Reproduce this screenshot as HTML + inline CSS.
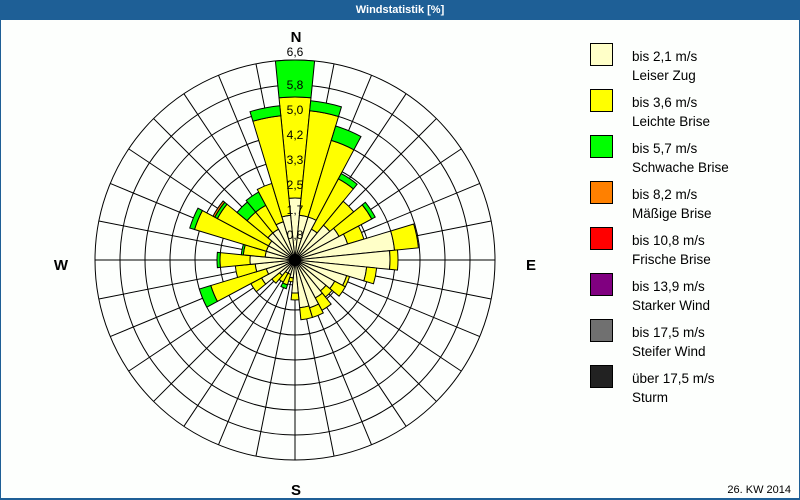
<!DOCTYPE html>
<html><head><meta charset="utf-8"><style>
html,body{margin:0;padding:0;background:#fff}
#w{position:relative;width:800px;height:500px;overflow:hidden;background:#fdfffd;font-family:"Liberation Sans",sans-serif}
#hd{position:absolute;left:0;top:0;width:800px;height:20px;background:#1e5f96;color:#fff;font-weight:bold;font-size:11px;text-align:center;line-height:20px}
#fr{position:absolute;left:0;top:20px;width:798px;height:478px;border-left:1px solid #1e5f96;border-right:1px solid #1e5f96;border-bottom:2px solid #1e5f96}
svg{position:absolute;left:0;top:0}
</style></head><body><div id="w">
<div id="fr"></div>
<div id="hd">Windstatistik [%]</div>
<svg id="s" width="800" height="500" xmlns="http://www.w3.org/2000/svg">
<g id="grid" fill="none" stroke="#000" stroke-width="1"></g>
<g id="bars" stroke="#000" stroke-width="1"></g>
<circle cx="295" cy="260" r="6" fill="#000"/>
<g font-size="12" fill="#000" text-anchor="middle" font-family="Liberation Sans, sans-serif">
<text x="295" y="239">0,8</text><text x="295" y="214">1,7</text><text x="295" y="189">2,5</text><text x="295" y="164">3,3</text><text x="295" y="139">4,2</text><text x="295" y="114">5,0</text><text x="295" y="89">5,8</text><text x="295" y="56">6,6</text>
</g>
<g font-size="15" font-weight="bold" fill="#000" text-anchor="middle" font-family="Liberation Sans, sans-serif">
<text x="296" y="42">N</text><text x="61" y="270">W</text><text x="531" y="270">E</text><text x="296" y="495">S</text>
</g>
<g stroke="#000" stroke-width="1">
<rect x="590.5" y="43.5" width="22" height="22" fill="#ffffc8"/>
<rect x="590.5" y="89.5" width="22" height="22" fill="#ffff00"/>
<rect x="590.5" y="135.5" width="22" height="22" fill="#00ff00"/>
<rect x="590.5" y="181.5" width="22" height="22" fill="#ff8000"/>
<rect x="590.5" y="227.5" width="22" height="22" fill="#ff0000"/>
<rect x="590.5" y="273.5" width="22" height="22" fill="#800080"/>
<rect x="590.5" y="319.5" width="22" height="22" fill="#707070"/>
<rect x="590.5" y="365.5" width="22" height="22" fill="#222"/>
</g>
<g font-size="13.5" fill="#000" font-family="Liberation Sans, sans-serif">
<text x="632" y="61">bis 2,1 m/s</text><text x="632" y="80">Leiser Zug</text>
<text x="632" y="107">bis 3,6 m/s</text><text x="632" y="126">Leichte Brise</text>
<text x="632" y="153">bis 5,7 m/s</text><text x="632" y="172">Schwache Brise</text>
<text x="632" y="199">bis 8,2 m/s</text><text x="632" y="218">Mäßige Brise</text>
<text x="632" y="245">bis 10,8 m/s</text><text x="632" y="264">Frische Brise</text>
<text x="632" y="291">bis 13,9 m/s</text><text x="632" y="310">Starker Wind</text>
<text x="632" y="337">bis 17,5 m/s</text><text x="632" y="356">Steifer Wind</text>
<text x="632" y="383">über 17,5 m/s</text><text x="632" y="402">Sturm</text>
</g>
<text x="791" y="493" font-size="11" text-anchor="end" fill="#000" font-family="Liberation Sans, sans-serif">26. KW 2014</text>
</svg>
<script>
(function(){
var cx=295,cy=260,ns="http://www.w3.org/2000/svg";
var g=document.getElementById('grid');
for(var r=25;r<=200;r+=25){var c=document.createElementNS(ns,'circle');c.setAttribute('cx',cx);c.setAttribute('cy',cy);c.setAttribute('r',r);g.appendChild(c);}
for(var i=0;i<32;i++){var a=i*11.25*Math.PI/180;var l=document.createElementNS(ns,'line');l.setAttribute('x1',cx);l.setAttribute('y1',cy);l.setAttribute('x2',cx+200*Math.sin(a));l.setAttribute('y2',cy-200*Math.cos(a));g.appendChild(l);}
var cols=['#ffffc8','#ffff00','#00ff00','#ff8000','#ff0000'];
var d=[[62,163,200],[45,150,160],[45,125,140],[35,92,98],[45,76],[50,87,91],[55,72],[100,124],[95,103],[72,82],[54,57],[45,57],[40,48],[43,57],[50,60],[48,60],[33,40],[18,22],[15,26,30],[15,25],[20,30],[38,50],[30,88,100],[40,60],[45,75,78],[30,52,54],[30,105,110],[30,88,91,93],[35,62,75],[35,62,77],[40,80],[45,145,155]];
var b=document.getElementById('bars');
function P(r,a){a=a*Math.PI/180;return (cx+r*Math.sin(a)).toFixed(2)+' '+(cy-r*Math.cos(a)).toFixed(2);}
for(var i=0;i<32;i++){var ang=i*11.25,a1=ang-5.625,a2=ang+5.625,prev=0;
for(var k=0;k<d[i].length;k++){var r=d[i][k];var p=document.createElementNS(ns,'path');
var s;if(prev==0){s='M'+cx+' '+cy+' L'+P(r,a1)+' A'+r+' '+r+' 0 0 1 '+P(r,a2)+' Z';}
else{s='M'+P(prev,a1)+' L'+P(r,a1)+' A'+r+' '+r+' 0 0 1 '+P(r,a2)+' L'+P(prev,a2)+' A'+prev+' '+prev+' 0 0 0 '+P(prev,a1)+' Z';}
p.setAttribute('d',s);p.setAttribute('fill',cols[k]);b.appendChild(p);prev=r;}}
})();
</script>
</div></body></html>
